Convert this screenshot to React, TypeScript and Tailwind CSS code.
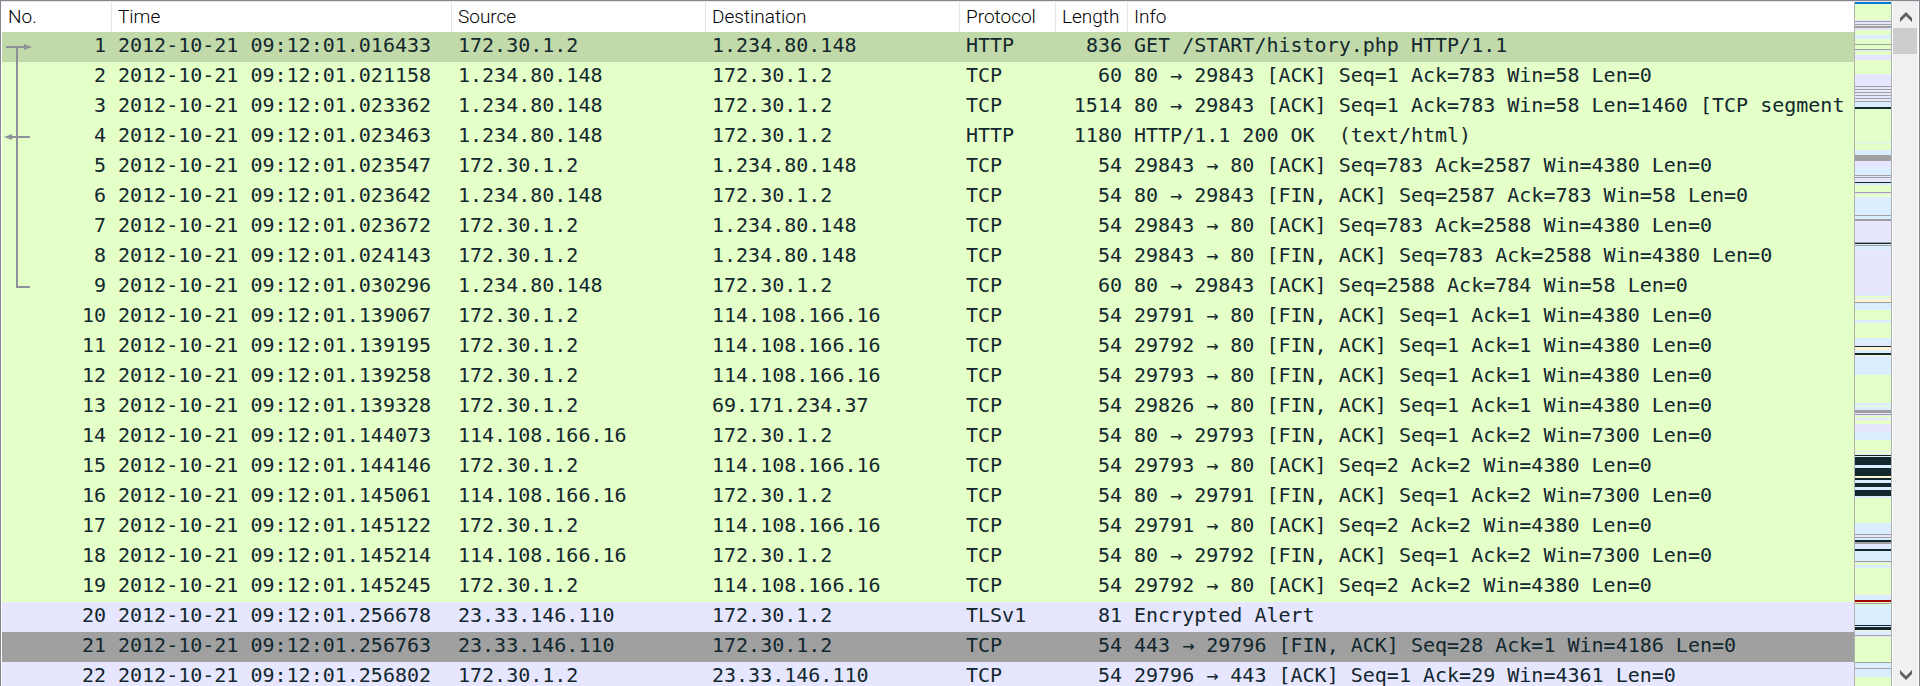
import React from 'react';
import clsx from 'clsx';

interface Packet {
  no: number;
  time: string;
  source: string;
  destination: string;
  protocol: string;
  length: number;
  info: string;
}

const HOST = '172.30.1.2';

const packets: Packet[] = [
  { no: 1, time: '09:12:01.016433', source: HOST, destination: '1.234.80.148', protocol: 'HTTP', length: 836, info: 'GET /START/history.php HTTP/1.1' },
  { no: 2, time: '09:12:01.021158', source: '1.234.80.148', destination: HOST, protocol: 'TCP', length: 60, info: '80 → 29843 [ACK] Seq=1 Ack=783 Win=58 Len=0' },
  { no: 3, time: '09:12:01.023362', source: '1.234.80.148', destination: HOST, protocol: 'TCP', length: 1514, info: '80 → 29843 [ACK] Seq=1 Ack=783 Win=58 Len=1460 [TCP segment' },
  { no: 4, time: '09:12:01.023463', source: '1.234.80.148', destination: HOST, protocol: 'HTTP', length: 1180, info: 'HTTP/1.1 200 OK  (text/html)' },
  { no: 5, time: '09:12:01.023547', source: HOST, destination: '1.234.80.148', protocol: 'TCP', length: 54, info: '29843 → 80 [ACK] Seq=783 Ack=2587 Win=4380 Len=0' },
  { no: 6, time: '09:12:01.023642', source: '1.234.80.148', destination: HOST, protocol: 'TCP', length: 54, info: '80 → 29843 [FIN, ACK] Seq=2587 Ack=783 Win=58 Len=0' },
  { no: 7, time: '09:12:01.023672', source: HOST, destination: '1.234.80.148', protocol: 'TCP', length: 54, info: '29843 → 80 [ACK] Seq=783 Ack=2588 Win=4380 Len=0' },
  { no: 8, time: '09:12:01.024143', source: HOST, destination: '1.234.80.148', protocol: 'TCP', length: 54, info: '29843 → 80 [FIN, ACK] Seq=783 Ack=2588 Win=4380 Len=0' },
  { no: 9, time: '09:12:01.030296', source: '1.234.80.148', destination: HOST, protocol: 'TCP', length: 60, info: '80 → 29843 [ACK] Seq=2588 Ack=784 Win=58 Len=0' },
  { no: 10, time: '09:12:01.139067', source: HOST, destination: '114.108.166.16', protocol: 'TCP', length: 54, info: '29791 → 80 [FIN, ACK] Seq=1 Ack=1 Win=4380 Len=0' },
  { no: 11, time: '09:12:01.139195', source: HOST, destination: '114.108.166.16', protocol: 'TCP', length: 54, info: '29792 → 80 [FIN, ACK] Seq=1 Ack=1 Win=4380 Len=0' },
  { no: 12, time: '09:12:01.139258', source: HOST, destination: '114.108.166.16', protocol: 'TCP', length: 54, info: '29793 → 80 [FIN, ACK] Seq=1 Ack=1 Win=4380 Len=0' },
  { no: 13, time: '09:12:01.139328', source: HOST, destination: '69.171.234.37', protocol: 'TCP', length: 54, info: '29826 → 80 [FIN, ACK] Seq=1 Ack=1 Win=4380 Len=0' },
  { no: 14, time: '09:12:01.144073', source: '114.108.166.16', destination: HOST, protocol: 'TCP', length: 54, info: '80 → 29793 [FIN, ACK] Seq=1 Ack=2 Win=7300 Len=0' },
  { no: 15, time: '09:12:01.144146', source: HOST, destination: '114.108.166.16', protocol: 'TCP', length: 54, info: '29793 → 80 [ACK] Seq=2 Ack=2 Win=4380 Len=0' },
  { no: 16, time: '09:12:01.145061', source: '114.108.166.16', destination: HOST, protocol: 'TCP', length: 54, info: '80 → 29791 [FIN, ACK] Seq=1 Ack=2 Win=7300 Len=0' },
  { no: 17, time: '09:12:01.145122', source: HOST, destination: '114.108.166.16', protocol: 'TCP', length: 54, info: '29791 → 80 [ACK] Seq=2 Ack=2 Win=4380 Len=0' },
  { no: 18, time: '09:12:01.145214', source: '114.108.166.16', destination: HOST, protocol: 'TCP', length: 54, info: '80 → 29792 [FIN, ACK] Seq=1 Ack=2 Win=7300 Len=0' },
  { no: 19, time: '09:12:01.145245', source: HOST, destination: '114.108.166.16', protocol: 'TCP', length: 54, info: '29792 → 80 [ACK] Seq=2 Ack=2 Win=4380 Len=0' },
  { no: 20, time: '09:12:01.256678', source: '23.33.146.110', destination: HOST, protocol: 'TLSv1', length: 81, info: 'Encrypted Alert' },
  { no: 21, time: '09:12:01.256763', source: '23.33.146.110', destination: HOST, protocol: 'TCP', length: 54, info: '443 → 29796 [FIN, ACK] Seq=28 Ack=1 Win=4186 Len=0' },
  { no: 22, time: '09:12:01.256802', source: HOST, destination: '23.33.146.110', protocol: 'TCP', length: 54, info: '29796 → 443 [ACK] Seq=1 Ack=29 Win=4361 Len=0' },
];

const rowColor = (no: number) => {
  if (no === 1) return 'bg-[#c2d9a9]';
  if (no === 21) return 'bg-[#a0a0a0]';
  return no < 20 ? 'bg-[#e4ffc7]' : 'bg-[#e7e6ff]';
};

const COLUMNS = [
  { title: 'No.', width: 'w-[110px]' },
  { title: 'Time', width: 'w-[340px]' },
  { title: 'Source', width: 'w-[254px]' },
  { title: 'Destination', width: 'w-[254px]' },
  { title: 'Protocol', width: 'w-[96px]' },
  { title: 'Length', width: 'w-[72px]' },
  { title: 'Info', width: '' },
];

// G http, L tcp, B udp, N fin/syn, D bad tcp, C broadcast, R reset, S selected
const STRIPE_COLORS: Record<string, string> = {
  G: '#e4ffc7',
  L: '#e7e6ff',
  B: '#daeeff',
  N: '#a0a0a0',
  D: '#12272e',
  C: '#fff3d6',
  R: '#a40000',
  S: '#0078d7',
};

// Colour key followed by the height of the stripe
const STRIPES =
  'S2 G16 L1 N1 L2 N1 L1 N2 L2 G5 B4 G5 N1 G4 N1 L1 G4 L5 G14 L12 N1 L2 N1 L2 N1 L2 N1 L2 N1 L2 N1 B5 D2 ' +
  'G33 B1 G7 B5 N6 L6 B8 N1 L1 N1 L4 D1 B2 G7 N1 L1 G3 B18 N1 B3 N2 L21 N1 D1 B1 N1 B4 L45 B1 G2 B1 C3 N1 ' +
  'B7 G10 B3 G15 B5 L3 D1 C3 B3 D2 C1 B19 G28 B3 G1 B3 N3 L1 N1 L1 G2 L2 G4 L8 B8 G11 L1 G2 L1 D1 B1 D8 ' +
  'B3 D8 C2 D2 B3 D4 B3 D6 B2 G25 B11 N1 L2 N1 B2 D2 N2 L1 B4 D2 B10 N1 L1 G2 B3 G26 C1 B5 R2 G1 N1 G1 ' +
  'B20 D1 B1 D3 C1 B4 N1 L1 G25 N1 B5 N1 B8 G9';

const Minimap: React.FC = () => {
  let y = 0;
  return (
    <svg
      className="h-full w-[38px] shrink-0 border-x border-[#b0b0b0]"
      viewBox="0 0 36 684"
      preserveAspectRatio="none"
      shapeRendering="crispEdges"
      aria-hidden="true"
    >
      {STRIPES.split(' ').map((stripe, index) => {
        const height = Number(stripe.slice(1));
        const top = y;
        y += height;
        return <rect key={index} y={top} width="36" height={height} fill={STRIPE_COLORS[stripe[0]]} />;
      })}
    </svg>
  );
};

const ConversationLines: React.FC = () => (
  <svg
    className="pointer-events-none absolute left-0 top-[30px]"
    width="32"
    height="260"
    viewBox="0 0 32 260"
    fill="none"
    stroke="#8b929a"
    strokeWidth="2"
    aria-hidden="true"
  >
    <path d="M4 15H24M15 15V255H28M8 105H28" />
    <path d="M22 12L30 15L22 18ZM10 102L2 105L10 108Z" fill="#8b929a" stroke="none" />
  </svg>
);

const Scrollbar: React.FC = () => (
  <div className="ml-px mr-px flex w-[25px] shrink-0 flex-col bg-[#f0f0f0]">
    <button type="button" aria-label="Scroll up" className="flex h-[26px] shrink-0 items-center justify-center">
      <svg width="12" height="10" viewBox="0 0 12 10" fill="#606060" className="mt-1">
        <path d="M6 0L12 6V10L6 4L0 10V6Z" />
      </svg>
    </button>
    <div className="h-[26px] w-6 shrink-0 bg-[#cdcdcd]" />
    <div className="flex-1" />
    <button type="button" aria-label="Scroll down" className="flex h-[22px] shrink-0 justify-center">
      <svg width="12" height="10" viewBox="0 0 12 10" fill="#606060" className="mt-1.5">
        <path d="M6 10L12 4V0L6 6L0 0V4Z" />
      </svg>
    </button>
  </div>
);

const PacketTable: React.FC = () => (
  <div className="relative min-w-0 flex-1 overflow-hidden">
    <table className="w-full table-fixed border-separate border-spacing-0 text-left">
      <thead>
        <tr className="h-[30px] font-[Roboto,sans-serif] text-[19px] leading-6 text-black">
          {COLUMNS.map((column) => (
            <th
              key={column.title}
              scope="col"
              className={clsx(
                'border-r border-[#e5e5e5] pb-px pl-1.5 font-light last:border-r-0',
                column.width,
              )}
            >
              {column.title}
            </th>
          ))}
        </tr>
      </thead>
      <tbody className="font-['DejaVu_Sans_Mono',monospace] text-xl leading-[26px] whitespace-pre text-[#12272e]">
        {packets.map((packet) => (
          <tr key={packet.no} className={clsx('h-[30px]', rowColor(packet.no))}>
            <td className="pr-1.5 pb-1 text-right">{packet.no}</td>
            <td className="pb-1 pl-1.5">2012-10-21 {packet.time}</td>
            <td className="pb-1 pl-1.5">{packet.source}</td>
            <td className="pb-1 pl-1.5">{packet.destination}</td>
            <td className="pb-1 pl-1.5">{packet.protocol}</td>
            <td className="pr-1.5 pb-1 text-right">{packet.length}</td>
            <td className="overflow-hidden pb-1 pl-1.5">{packet.info}</td>
          </tr>
        ))}
      </tbody>
    </table>
    <ConversationLines />
  </div>
);

const App: React.FC = () => (
  <main className="flex h-screen overflow-hidden border-x border-t border-[#828790] bg-[#e8e8e8] pt-px">
    <div className="flex min-w-0 flex-1 bg-white pl-px">
      <PacketTable />
      <Minimap />
      <Scrollbar />
    </div>
  </main>
);

export default App;
